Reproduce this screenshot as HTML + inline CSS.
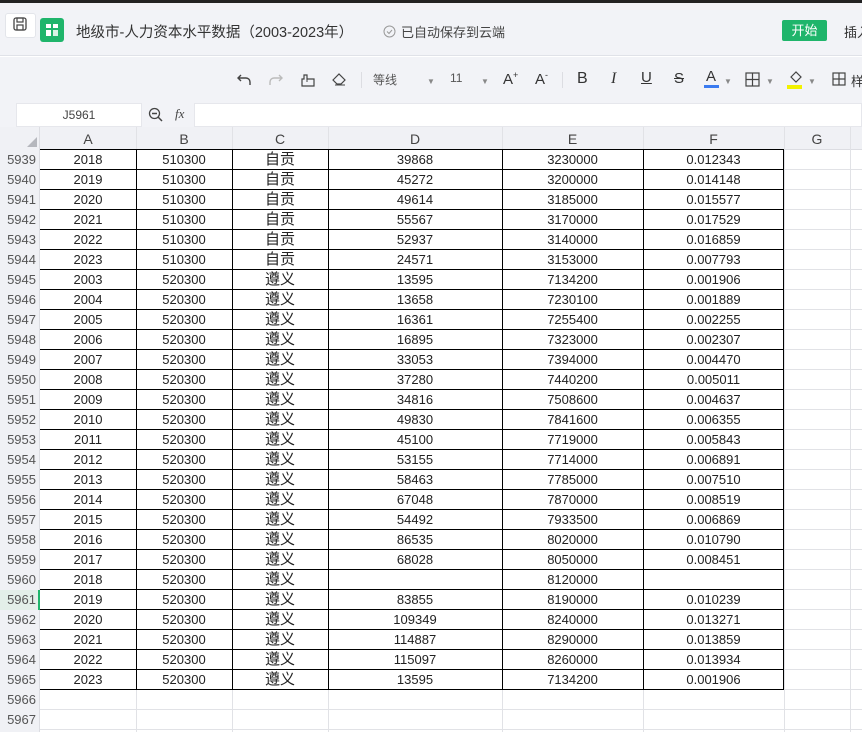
<!DOCTYPE html>
<html><head><meta charset="utf-8">
<style>
*{margin:0;padding:0;box-sizing:border-box}
body{width:862px;height:732px;overflow:hidden;background:#fff;font-family:"Liberation Sans","Noto Sans CJK SC",sans-serif;position:relative;color:#222}
.top{position:absolute;left:0;top:0;width:862px;height:3px;background:#222}
.hdr{position:absolute;left:0;top:3px;width:862px;height:53px;background:#f2f3f7;border-bottom:1px solid #e0e2e8}
.tb{position:absolute;left:0;top:57px;width:862px;height:46px;background:#f2f3f7}
.fb{position:absolute;left:0;top:103px;width:862px;height:24px;background:#f2f3f7}
.abs{position:absolute;white-space:nowrap}
.cell{position:absolute;font-size:13px;text-align:center;line-height:20px;height:20px;white-space:nowrap}
.ti{font-size:13px;color:#333}
</style></head><body>
<div class="top"></div>
<div class="hdr">
 <div class="abs" style="left:5px;top:10px;width:31px;height:25px;background:#fff;border:1px solid #e3e5ea;border-radius:3px"></div>
 <svg class="abs" style="left:12px;top:13px" width="16" height="16" viewBox="0 0 16 16"><rect x="2" y="2" width="12" height="12" rx="2" fill="none" stroke="#444" stroke-width="1.3"/><rect x="5" y="2" width="6" height="4" fill="none" stroke="#444" stroke-width="1.2"/><rect x="5" y="9" width="6" height="5" fill="none" stroke="#444" stroke-width="1.2"/></svg>
 <div class="abs" style="left:40px;top:15px;width:24px;height:24px;background:#1fb56b;border-radius:3px"></div>
 <div class="abs" style="left:46px;top:21px;width:5px;height:4px;background:#fff"></div>
 <div class="abs" style="left:53px;top:21px;width:5px;height:4px;background:#fff"></div>
 <div class="abs" style="left:46px;top:27px;width:5px;height:6px;background:#fff"></div>
 <div class="abs" style="left:53px;top:27px;width:5px;height:6px;background:#d8f3e5"></div>
 <div class="abs" style="left:76px;top:18px;font-size:14.5px;color:#333">地级市-人力资本水平数据（2003-2023年）</div>
 <svg class="abs" style="left:383px;top:22px" width="13" height="13"><circle cx="6.5" cy="6.5" r="5.5" fill="none" stroke="#999"/><path d="M4 6.5l2 2 3-3.5" fill="none" stroke="#999"/></svg>
 <div class="abs" style="left:401px;top:19px;font-size:13px;color:#444">已自动保存到云端</div>
 <div class="abs" style="left:782px;top:17px;width:45px;height:21px;background:#1fb56b;border-radius:2px;color:#fff;font-size:13px;text-align:center;line-height:21px">开始</div>
 <div class="abs" style="left:844px;top:19px;font-size:13px;color:#333">插入</div>
</div>
<div class="tb">
 <svg class="abs" style="left:236px;top:15px" width="16" height="16"><path d="M5 3L2 6l3 3M2 6h8a4 4 0 0 1 4 4v3" fill="none" stroke="#444" stroke-width="1.4"/></svg>
 <svg class="abs" style="left:268px;top:15px" width="16" height="16"><path d="M11 3l3 3-3 3M14 6H6a4 4 0 0 0-4 4v3" fill="none" stroke="#bbb" stroke-width="1.4"/></svg>
 <svg class="abs" style="left:300px;top:15px" width="16" height="16"><path d="M2 14h12V7H7V3H4v4H2z" fill="none" stroke="#444" stroke-width="1.2"/><path d="M7 7v3" stroke="#444"/></svg>
 <svg class="abs" style="left:331px;top:14px" width="17" height="16"><path d="M2 9l6-6 6 6-4 4H6z" fill="none" stroke="#444" stroke-width="1.2"/><path d="M4 14h10" stroke="#444"/></svg>
 <div class="abs" style="left:361px;top:15px;width:1px;height:16px;background:#dcdde2"></div>
 <div class="abs ti" style="left:373px;top:14px;font-size:12px;color:#555">等线</div>
 <div class="abs" style="left:427px;top:20px;font-size:8px;color:#888">▼</div>
 <div class="abs ti" style="left:450px;top:14px;font-size:12px;color:#555">11</div>
 <div class="abs" style="left:481px;top:20px;font-size:8px;color:#888">▼</div>
 <div class="abs ti" style="left:503px;top:13px;font-size:15px">A<sup style="font-size:9px">+</sup></div>
 <div class="abs ti" style="left:535px;top:13px;font-size:15px">A<sup style="font-size:9px">-</sup></div>
 <div class="abs" style="left:562px;top:15px;width:1px;height:16px;background:#dcdde2"></div>
 <div class="abs ti" style="left:577px;top:13px;font-size:16px">B</div>
 <div class="abs ti" style="left:611px;top:13px;font-size:16px;font-style:italic;font-family:'Liberation Serif'">I</div>
 <div class="abs ti" style="left:641px;top:12px;font-size:15px;text-decoration:underline">U</div>
 <div class="abs ti" style="left:674px;top:13px;font-size:15px;text-decoration:line-through">S</div>
 <div class="abs ti" style="left:706px;top:11px;font-size:15px">A</div>
 <div class="abs" style="left:704px;top:28px;width:15px;height:3px;background:#3b7bf0"></div>
 <div class="abs" style="left:724px;top:20px;font-size:8px;color:#888">▼</div>
 <svg class="abs" style="left:745px;top:15px" width="15" height="15"><rect x="1" y="1" width="13" height="13" fill="none" stroke="#444" stroke-width="1.2"/><path d="M7.5 1v13M1 7.5h13" stroke="#444" stroke-width="1.2"/></svg>
 <div class="abs" style="left:766px;top:20px;font-size:8px;color:#888">▼</div>
 <svg class="abs" style="left:788px;top:13px" width="15" height="14"><path d="M3 7l5-5 5 5-5 5z" fill="none" stroke="#444" stroke-width="1.2"/></svg>
 <div class="abs" style="left:787px;top:28px;width:15px;height:4px;background:#f2f200"></div>
 <div class="abs" style="left:808px;top:20px;font-size:8px;color:#888">▼</div>
 <svg class="abs" style="left:832px;top:15px" width="15" height="15"><rect x="1" y="1" width="12" height="12" fill="none" stroke="#444" stroke-width="1.2"/><path d="M7 1v12M1 7h12" stroke="#444" stroke-width="1.2"/></svg>
 <div class="abs ti" style="left:851px;top:14px">样</div>
</div>
<div class="fb">
 <div class="abs" style="left:16px;top:0;width:126px;height:24px;background:#fff;border:1px solid #e6e7ec;font-size:12px;text-align:center;line-height:22px;color:#444">J5961</div>
 <svg class="abs" style="left:148px;top:4px" width="16" height="16"><circle cx="6.5" cy="6.5" r="5" fill="none" stroke="#444" stroke-width="1.3"/><path d="M4 6.5h5M10 10l4 4" stroke="#444" stroke-width="1.5"/></svg>
 <div class="abs" style="left:175px;top:3px;font-size:13px;font-style:italic;font-family:'Liberation Serif';color:#444">fx</div>
 <div class="abs" style="left:194px;top:0;width:668px;height:24px;background:#fff;border:1px solid #e6e7ec"></div>
</div>
<div id="g"></div>
<script>
var cols=[40,136,232,328,502,643,784,850,862];
var names=["A","B","C","D","E","F","G",""];
var h='';
h+='<div class="abs" style="left:0;top:127px;width:862px;height:23px;background:#f0f1f5;border-bottom:1px solid #dcdde2"></div>';
h+='<div class="abs" style="left:0;top:127px;width:40px;height:605px;background:#f0f1f5;border-right:1px solid #dcdde2"></div>';
h+='<svg class="abs" style="left:26px;top:136px" width="12" height="12"><path d="M11 1V11H1z" fill="#b5b7bd"/></svg>';
for(var i=0;i<8;i++){h+='<div class="cell" style="left:'+cols[i]+'px;top:129px;width:'+(cols[i+1]-cols[i])+'px;color:#444;font-size:14px">'+names[i]+'</div>';
 h+='<div class="abs" style="left:'+cols[i+1]+'px;top:127px;width:1px;height:605px;background:#e1e2e6"></div>';}
var d=[[2018,510300,"自贡",39868,3230000,"0.012343"],[2019,510300,"自贡",45272,3200000,"0.014148"],[2020,510300,"自贡",49614,3185000,"0.015577"],[2021,510300,"自贡",55567,3170000,"0.017529"],[2022,510300,"自贡",52937,3140000,"0.016859"],[2023,510300,"自贡",24571,3153000,"0.007793"],
[2003,520300,"遵义",13595,7134200,"0.001906"],[2004,520300,"遵义",13658,7230100,"0.001889"],[2005,520300,"遵义",16361,7255400,"0.002255"],[2006,520300,"遵义",16895,7323000,"0.002307"],[2007,520300,"遵义",33053,7394000,"0.004470"],[2008,520300,"遵义",37280,7440200,"0.005011"],[2009,520300,"遵义",34816,7508600,"0.004637"],[2010,520300,"遵义",49830,7841600,"0.006355"],[2011,520300,"遵义",45100,7719000,"0.005843"],[2012,520300,"遵义",53155,7714000,"0.006891"],[2013,520300,"遵义",58463,7785000,"0.007510"],[2014,520300,"遵义",67048,7870000,"0.008519"],[2015,520300,"遵义",54492,7933500,"0.006869"],[2016,520300,"遵义",86535,8020000,"0.010790"],[2017,520300,"遵义",68028,8050000,"0.008451"],[2018,520300,"遵义","",8120000,""],[2019,520300,"遵义",83855,8190000,"0.010239"],[2020,520300,"遵义",109349,8240000,"0.013271"],[2021,520300,"遵义",114887,8290000,"0.013859"],[2022,520300,"遵义",115097,8260000,"0.013934"],[2023,520300,"遵义",13595,7134200,"0.001906"]];
for(var r=0;r<29;r++){var y=150+r*20;var n=5939+r;
 var sel=n==5961;
 if(sel)h+='<div class="abs" style="left:0;top:'+y+'px;width:40px;height:20px;background:#e3efe9"></div><div class="abs" style="left:38px;top:'+y+'px;width:2px;height:20px;background:#1fb56b"></div>';
 h+='<div class="cell" style="left:0;top:'+(y)+'px;width:36px;text-align:right;color:#555;font-size:13px">'+n+'</div>';
 h+='<div class="abs" style="left:40px;top:'+(y+19)+'px;width:822px;height:1px;background:#e1e2e6"></div>';
 if(r<27){var row=d[r];
  for(var c=0;c<6;c++){var v=row[c];var fs=c==2?'font-size:15px;':'';
   h+='<div class="cell" style="'+fs+'left:'+cols[c]+'px;top:'+y+'px;width:'+(cols[c+1]-cols[c])+'px">'+v+'</div>';}
 }
}
h+='<div class="abs" style="left:40px;top:150px;width:744px;height:540px;border-right:1px solid #000"></div>';
for(var r=0;r<=27;r++){h+='<div class="abs" style="left:40px;top:'+(149+r*20)+'px;width:744px;height:1px;background:#000"></div>';}
for(var c=1;c<6;c++){h+='<div class="abs" style="left:'+cols[c]+'px;top:150px;width:1px;height:540px;background:#000"></div>';}
document.getElementById('g').innerHTML=h;
</script>
</body></html>
